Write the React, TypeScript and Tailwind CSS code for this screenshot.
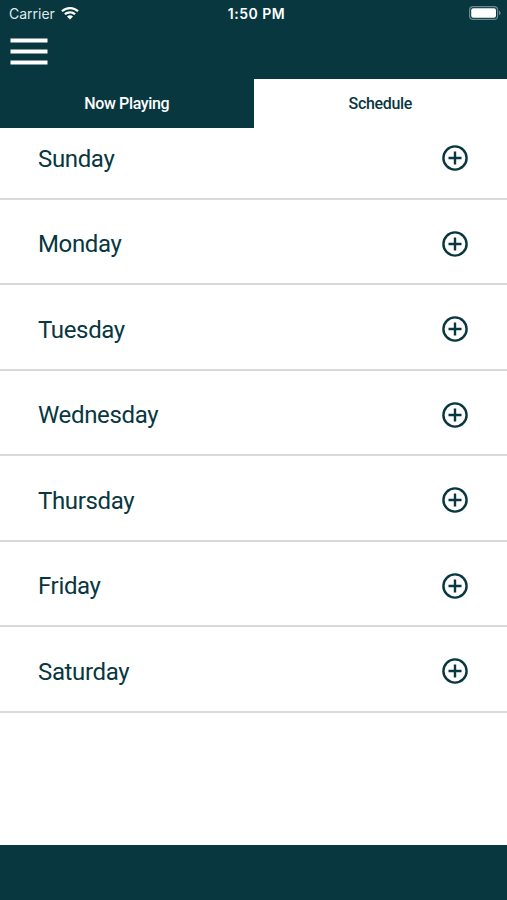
const days = ["Sunday", "Monday", "Tuesday", "Wednesday", "Thursday", "Friday", "Saturday"];

function WifiIcon() {
  return (
    <svg viewBox="0 0 18 13" className="-mt-0.5 h-[13px] w-[18px]" fill="currentColor">
      <path d="M9 0C5.600 0 2.500 1.300.2 3.500l1.500 1.600A10.500 10.500 0 0 1 9 2.200c2.800 0 5.400 1.100 7.300 2.900l1.500-1.600A12.700 12.700 0 0 0 9 0Z" />
      <path d="M9 4.200c-2.300 0-4.300.9-5.900 2.300l1.600 1.600A6.300 6.300 0 0 1 9 6.400c1.600 0 3.100.6 4.300 1.700l1.600-1.600A8.600 8.600 0 0 0 9 4.200Z" />
      <path d="M9 8.300c-1.200 0-2.200.4-3 1.100l3 3.200 3-3.200c-.8-.7-1.800-1.100-3-1.100Z" />
    </svg>
  );
}

function StatusBar() {
  return (
    <div className="grid h-7 grid-cols-3 items-center pl-[9px] pr-1.5 font-['Inter',sans-serif] text-white">
      <div className="flex items-center gap-1.5 text-sm">
        <span className="text-[#dfe9ea]">Carrier</span>
        <WifiIcon />
      </div>
      <span className="pl-[3px] text-center text-sm font-semibold tracking-[0.5px]">1:50 PM</span>
      <svg viewBox="0 0 32 14" className="-mt-0.5 h-3.5 w-8 justify-self-end">
        <rect x="0.600" y="0.600" width="28" height="12.800" rx="3.500" fill="none" stroke="#6b8a90" strokeWidth="1.200" />
        <rect x="2.200" y="2.200" width="24.800" height="9.600" rx="2" fill="#fff" />
        <path d="M30 4.800c1 .4 1.500 1.200 1.500 2.200s-.5 1.800-1.500 2.200Z" fill="#6b8a90" />
      </svg>
    </div>
  );
}

function DayRow({ day }: { day: string }) {
  return (
    <li className="flex h-[85.5px] items-center justify-between border-b-2 border-[#d9d9d9] pl-[38px] pr-[39px] pt-[5px]">
      <span className="pt-px text-2xl tracking-[-0.35px]">{day}</span>
      <svg viewBox="0 0 26 26" className="size-[26px]" fill="none" stroke="currentColor" strokeWidth="2.400">
        <circle cx="13" cy="13" r="11.600" />
        <path d="M13 6.500v13M6.500 13h13" />
      </svg>
    </li>
  );
}

export default function App() {
  return (
    <div className="flex h-[900px] w-[507px] flex-col overflow-hidden bg-white font-['Roboto',sans-serif] text-[#08373f]">
      <header className="h-[79px] shrink-0 bg-[#08373f]">
        <StatusBar />
        <button aria-label="Menu" className="ml-2.5 mt-2.5 block text-white">
          <svg viewBox="0 0 38 27" className="h-[27px] w-[38px]" fill="currentColor">
            <rect x="0.500" y="0.500" width="37" height="4" />
            <rect x="0.500" y="11.500" width="37" height="4" />
            <rect x="0.500" y="22.500" width="37" height="4" />
          </svg>
        </button>
      </header>
      <nav className="grid h-[49px] shrink-0 grid-cols-2 text-base font-medium tracking-[-0.35px]">
        <button className="bg-[#08373f] text-white">Now Playing</button>
        <button>Schedule</button>
      </nav>
      <main className="flex-1 overflow-hidden">
        <ul className="-mt-[14px]">
          {days.map((day) => (
            <DayRow key={day} day={day} />
          ))}
        </ul>
      </main>
      <footer className="h-[55px] shrink-0 bg-[#08373f]" />
    </div>
  );
}
